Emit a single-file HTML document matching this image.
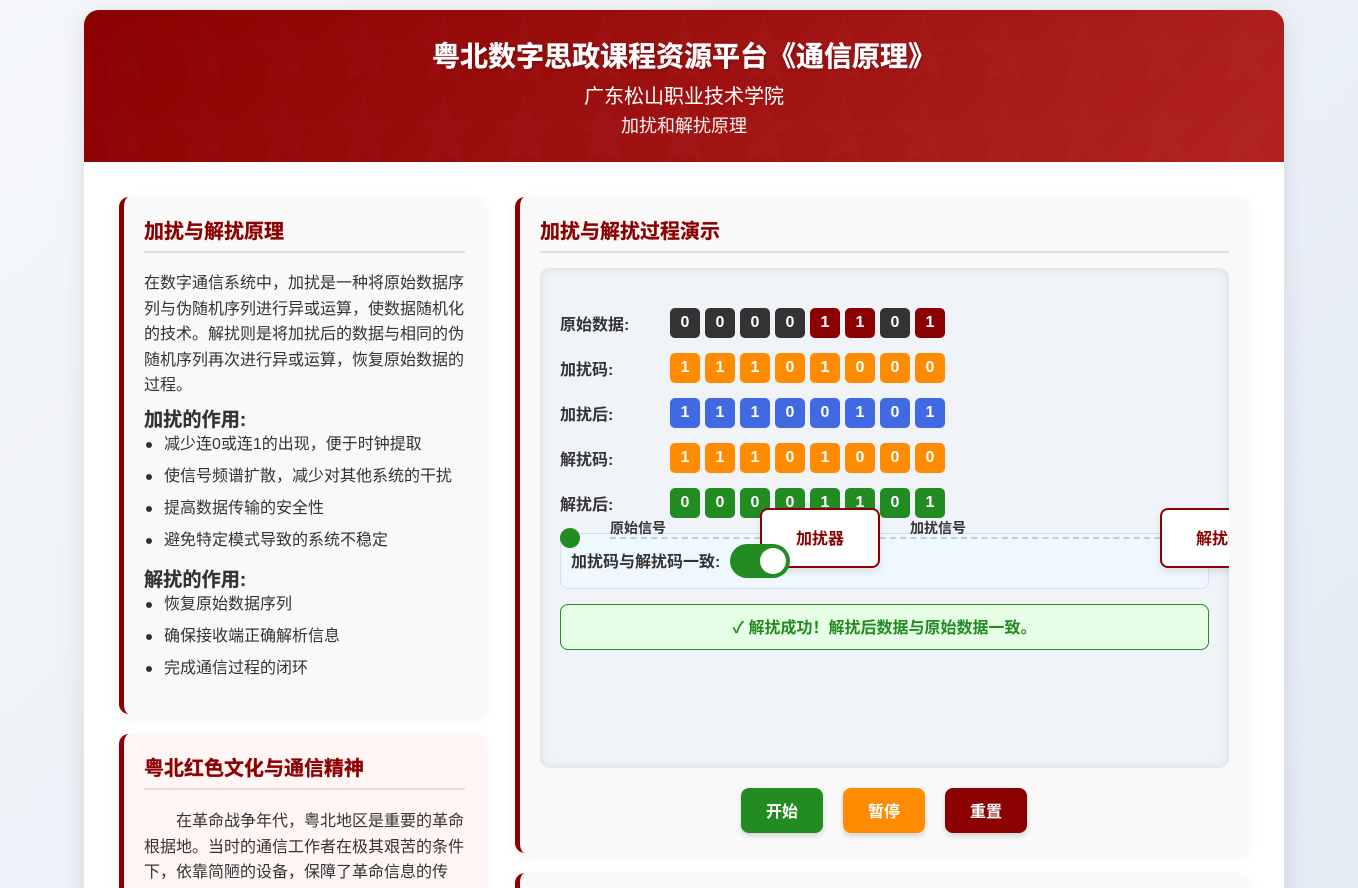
<!DOCTYPE html>
<html lang="zh-CN">
<head>
<meta charset="utf-8">
<title>粤北数字思政课程资源平台《通信原理》</title>
<style>
*{box-sizing:border-box;margin:0;padding:0}
html,body{width:1358px;height:888px;overflow:hidden}
body{position:relative;background:linear-gradient(135deg,#f5f7fa 0%,#e4ebf5 100%);font-family:"Liberation Sans","Noto Sans CJK SC","WenQuanYi Zen Hei",sans-serif;color:#333;font-size:16px;line-height:25.6px}
.container{position:absolute;left:84px;top:10px;width:1200px;height:1000px;background:#fff;border-radius:15px;box-shadow:0 5px 25px rgba(0,0,0,.1);overflow:hidden}
header{position:absolute;left:0;top:0;width:1200px;height:152px;background:linear-gradient(135deg,#8b0000,#b22222);color:#fff;text-align:center}
header svg{position:absolute;left:0;top:0}
header h1{position:absolute;left:0;width:1200px;top:24px;font-size:28px;line-height:45px;font-weight:bold;text-shadow:1px 1px 3px rgba(0,0,0,.3);-webkit-text-stroke:.3px #fff}
header .s1{position:absolute;left:0;width:1200px;top:71px;font-size:20px;line-height:32px}
header .s2{position:absolute;left:0;width:1200px;top:102px;font-size:18px;line-height:29px;opacity:.95}
.card{position:absolute;background:#f9f9f9;border-left:5px solid #8b0000;border-radius:10px;box-shadow:0 4px 15px rgba(0,0,0,.05);padding:20px}
h2{font-size:20px;line-height:32px;color:#8b0000;font-weight:bold;height:37px;border-bottom:2px solid #e0e0e0;margin-bottom:18px;margin-top:-1px;-webkit-text-stroke:.3px #8b0000}
h3{font-size:19.2px;line-height:30.7px;height:25.7px;font-weight:bold;margin-top:7px;color:#333;-webkit-text-stroke:.2px #333}
ul{list-style:none;padding-left:20px}
li{margin-bottom:6.4px;position:relative}
li::before{content:"";position:absolute;left:-18px;top:10px;width:6px;height:6px;border-radius:50%;background:#333}
.demo{position:absolute;left:20px;top:71px;width:689px;height:500px;background:#f0f4f8;border-radius:10px;box-shadow:inset 0 0 10px rgba(0,0,0,.1);overflow:hidden}
.row{position:absolute;left:20px;display:flex;align-items:center;height:30px}
.row b{display:block;width:110px;font-size:16px;position:relative;top:3px}
.bits{display:flex;gap:5px}
.bit{width:30px;height:30px;border-radius:5px;color:#fff;font-weight:bold;font-size:16px;line-height:30px;text-align:center}
.k{background:#333}.r{background:#8b0000}.o{background:#ff8c00}.u{background:#4169e1}.g{background:#228b22}
.strip{position:absolute;left:20px;top:265px;width:649px;height:56px;background:#f0f8ff;border:1px solid #cfe2f3;border-radius:8px;font-weight:bold;padding:16px 10px 0;line-height:26px;color:#333}
.dot{position:absolute;left:20px;top:260px;width:20px;height:20px;border-radius:50%;background:#228b22}
.lab{position:absolute;top:247px;font-size:14px;font-weight:bold;line-height:26px;color:#333}
.line{position:absolute;top:269px;height:0;border-top:2px dashed #c4cdd4}
.box{position:absolute;top:240px;width:120px;height:60px;background:#fff;border:2px solid #8b0000;border-radius:8px;color:#8b0000;font-weight:bold;text-align:center;line-height:60px;box-shadow:0 4px 8px rgba(0,0,0,.1)}
.tog{position:absolute;left:190px;top:276px;width:60px;height:34px;border-radius:17px;background:#228b22}
.tog i{position:absolute;left:30px;top:4px;width:26px;height:26px;border-radius:50%;background:#fff}
.ok{position:absolute;left:20px;top:336px;width:649px;height:46px;background:#e6ffe6;border:1px solid #228b22;border-radius:8px;color:#228b22;font-weight:bold;text-align:center;line-height:47px}
.btn{position:absolute;top:591px;width:82px;height:45px;border-radius:8px;color:#fff;font-weight:bold;text-align:center;line-height:49px;box-shadow:0 3px 6px rgba(0,0,0,.15)}
</style>
</head>
<body>
<div class="container">
<header>
<svg width="1200" height="152" xmlns="http://www.w3.org/2000/svg"><defs><pattern id="st" width="80" height="80" patternUnits="userSpaceOnUse"><path d="M40 5 47 29 72 30 52 46 59 75 40 60 21 75 28 46 8 30 33 29Z" fill="#fff" fill-opacity=".012"/></pattern></defs><rect width="1200" height="152" fill="url(#st)"/></svg>
<h1>粤北数字思政课程资源平台《通信原理》</h1>
<div class="s1">广东松山职业技术学院</div>
<div class="s2">加扰和解扰原理</div>
</header>
</div>

<div class="card" style="left:119px;top:197px;width:367px;height:517px;padding-right:21px">
<h2>加扰与解扰原理</h2>
<p>在数字通信系统中，加扰是一种将原始数据序列与伪随机序列进行异或运算，使数据随机化的技术。解扰则是将加扰后的数据与相同的伪随机序列再次进行异或运算，恢复原始数据的过程。</p>
<h3>加扰的作用:</h3>
<ul>
<li>减少连0或连1的出现，便于时钟提取</li>
<li>使信号频谱扩散，减少对其他系统的干扰</li>
<li>提高数据传输的安全性</li>
<li>避免特定模式导致的系统不稳定</li>
</ul>
<h3 style="margin-top:13px">解扰的作用:</h3>
<ul>
<li>恢复原始数据序列</li>
<li>确保接收端正确解析信息</li>
<li>完成通信过程的闭环</li>
</ul>
</div>

<div class="card" style="left:119px;top:734px;width:367px;height:300px;padding-right:21px;background:#fff5f5">
<h2>粤北红色文化与通信精神</h2>
<p style="text-indent:2em;margin-top:19px">在革命战争年代，粤北地区是重要的革命根据地。当时的通信工作者在极其艰苦的条件下，依靠简陋的设备，保障了革命信息的传递。　工</p>
</div>

<div class="card" style="left:515px;top:197px;width:734.33px;height:656px">
<h2>加扰与解扰过程演示</h2>
<div class="demo">
<div class="row" style="top:40px"><b>原始数据:</b><div class="bits"><div class="bit k">0</div><div class="bit k">0</div><div class="bit k">0</div><div class="bit k">0</div><div class="bit r">1</div><div class="bit r">1</div><div class="bit k">0</div><div class="bit r">1</div></div></div>
<div class="row" style="top:85px"><b>加扰码:</b><div class="bits"><div class="bit o">1</div><div class="bit o">1</div><div class="bit o">1</div><div class="bit o">0</div><div class="bit o">1</div><div class="bit o">0</div><div class="bit o">0</div><div class="bit o">0</div></div></div>
<div class="row" style="top:130px"><b>加扰后:</b><div class="bits"><div class="bit u">1</div><div class="bit u">1</div><div class="bit u">1</div><div class="bit u">0</div><div class="bit u">0</div><div class="bit u">1</div><div class="bit u">0</div><div class="bit u">1</div></div></div>
<div class="row" style="top:175px"><b>解扰码:</b><div class="bits"><div class="bit o">1</div><div class="bit o">1</div><div class="bit o">1</div><div class="bit o">0</div><div class="bit o">1</div><div class="bit o">0</div><div class="bit o">0</div><div class="bit o">0</div></div></div>
<div class="row" style="top:220px"><b>解扰后:</b><div class="bits"><div class="bit g">0</div><div class="bit g">0</div><div class="bit g">0</div><div class="bit g">0</div><div class="bit g">1</div><div class="bit g">1</div><div class="bit g">0</div><div class="bit g">1</div></div></div>
<div class="strip">加扰码与解扰码一致:</div>
<div class="line" style="left:70px;width:150px"></div>
<div class="line" style="left:340px;width:280px"></div>
<div class="dot"></div>
<div class="lab" style="left:70px">原始信号</div>
<div class="lab" style="left:370px">加扰信号</div>
<div class="box" style="left:220px">加扰器</div>
<div class="box" style="left:620px">解扰器</div>
<div class="tog"><i></i></div>
<div class="ok">✓ 解扰成功！解扰后数据与原始数据一致。</div>
</div>
<div class="btn g" style="left:221px">开始</div>
<div class="btn o" style="left:323px">暂停</div>
<div class="btn r" style="left:425px">重置</div>
</div>

<div class="card" style="left:515px;top:873px;width:734.33px;height:200px"></div>
</body>
</html>
